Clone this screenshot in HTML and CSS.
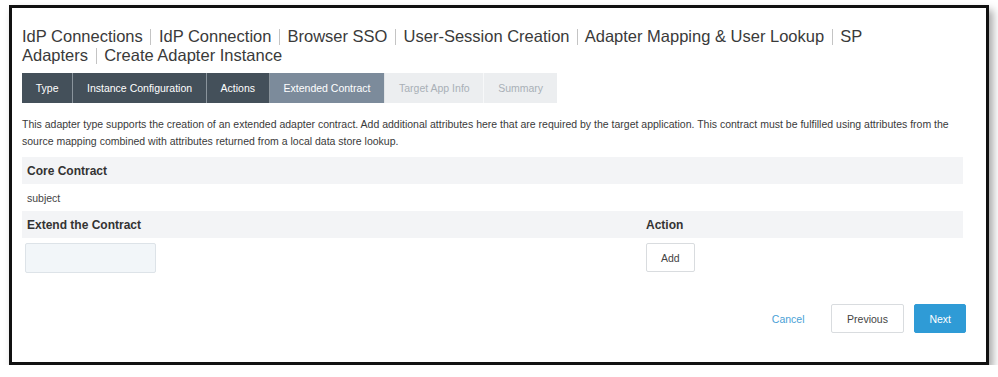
FILE: index.html
```html
<!DOCTYPE html>
<html lang="en">
<head>
<meta charset="UTF-8" />
<meta name="viewport" content="width=device-width, initial-scale=1.0" />
<title>Create Adapter Instance</title>
<link rel="stylesheet" href="styles.css">
</head>
<body>
<div class="frame">
  <!-- Breadcrumb title -->
  <h1 class="page-title">
    <span class="crumb">IdP Connections</span> <span class="crumb">IdP Connection</span> <span class="crumb">Browser SSO</span> <span class="crumb">User-Session Creation</span> <span class="crumb">Adapter Mapping &amp; User Lookup</span> <span class="crumb"><span>SP</span> <span>Adapters</span></span> <span class="crumb">Create Adapter Instance</span>
  </h1>

  <!-- Wizard tabs -->
  <div class="tabs">
    <div class="tab done">Type</div>
    <div class="tab done">Instance Configuration</div>
    <div class="tab done">Actions</div>
    <div class="tab active">Extended Contract</div>
    <div class="tab disabled">Target App Info</div>
    <div class="tab disabled">Summary</div>
  </div>

  <p class="description">This adapter type supports the creation of an extended adapter contract. Add additional attributes here that are required by the target application. This contract must be fulfilled using attributes from the source mapping combined with attributes returned from a local data store lookup.</p>

  <!-- Contract table -->
  <div class="contract">
    <div class="row head">
      <div class="cell">Core Contract</div>
    </div>
    <div class="row">
      <div class="cell">subject</div>
    </div>
    <div class="row head">
      <div class="cell">Extend the Contract</div>
      <div class="cell">Action</div>
    </div>
    <div class="row input-row">
      <div class="cell"><input type="text" class="text-input" /></div>
      <div class="cell"><button class="btn">Add</button></div>
    </div>
  </div>

  <!-- Footer -->
  <div class="footer">
    <a href="#" class="link">Cancel</a>
    <button class="btn btn-lg">Previous</button>
    <button class="btn btn-lg btn-primary">Next</button>
  </div>
</div>
</body>
</html>
```

FILE: styles.css
```css
* {
  box-sizing: border-box;
  margin: 0;
  padding: 0;
}
body {
  background: #fff;
  font-family: 'Liberation Sans', Arial, sans-serif;
  color: #333;
}
.frame {
  width: 980px;
  height: 360px;
  margin: 5px 0 0 9px;
  border: 3px solid #111;
  padding: 19px 20px 0 10px;
  box-shadow: 4px 5px 8px rgba(0,0,0,0.35);
  background: #fff;
}
.page-title {
  font-size: 16.5px;
  font-weight: normal;
  line-height: 19px;
  color: #3a3a3a;
  max-width: 905px;
}
.crumb::after {
  content: "";
  display: inline-block;
  width: 1px;
  height: 16px;
  background: #c4c4c4;
  margin: 0 3px 0 7.5px;
  vertical-align: -3px;
}
.crumb:last-child::after {
  display: none;
}
.tabs {
  display: flex;
  margin-top: 8px;
  height: 30px;
}
.tab {
  display: flex;
  align-items: center;
  padding: 0 13.75px;
  font-size: 10.5px;
  border-right: 1px solid #8a949c;
}
.tab.done {
  background: #44505a;
  color: #fff;
}
.tab.active {
  background: #7c8b9b;
  color: #fff;
  border-right-color: #e0e3e6;
}
.tab.disabled {
  background: #eceef0;
  color: #a9b0b7;
  border-right-color: #f7f8f9;
}
.tab.disabled:last-child {
  border-right: none;
}
.description {
  font-size: 10.5px;
  line-height: 16.5px;
  color: #3a3a3a;
  margin-top: 13px;
}
.contract {
  margin-top: 8px;
  margin-right: 3px;
}
.row {
  display: grid;
  grid-template-columns: 619px 1fr;
  height: 27px;
  align-items: center;
}
.row.head {
  background: #f3f4f6;
}
.cell {
  padding: 0 5px;
  font-size: 10.5px;
  color: #444;
}
.row.head .cell {
  font-size: 12px;
  font-weight: bold;
  color: #333;
}
.row.input-row {
  height: auto;
  padding-top: 5px;
  align-items: start;
}
.row.input-row .cell:first-child {
  padding-left: 3px;
}
.text-input {
  width: 131px;
  height: 30px;
  background: #f2f6f9;
  border: 1px solid #dde3e8;
  border-radius: 2px;
}
.btn {
  background: #fff;
  border: 1px solid #d9dcdf;
  border-radius: 2px;
  height: 29px;
  padding: 0 14px;
  font-family: 'Liberation Sans', Arial, sans-serif;
  font-size: 10.5px;
  color: #444;
  cursor: pointer;
}
.footer {
  display: flex;
  justify-content: flex-end;
  align-items: center;
  margin-top: 31px;
}
.link {
  font-size: 10.5px;
  color: #4a9fd6;
  text-decoration: none;
  margin-right: 16px;
}
.btn-lg {
  height: 29px;
  padding: 0 15.5px;
  margin-left: 10px;
}
.btn-primary {
  background: #2f9bd6;
  border-color: #2f9bd6;
  color: #fff;
  padding: 0 14px;
}
```
